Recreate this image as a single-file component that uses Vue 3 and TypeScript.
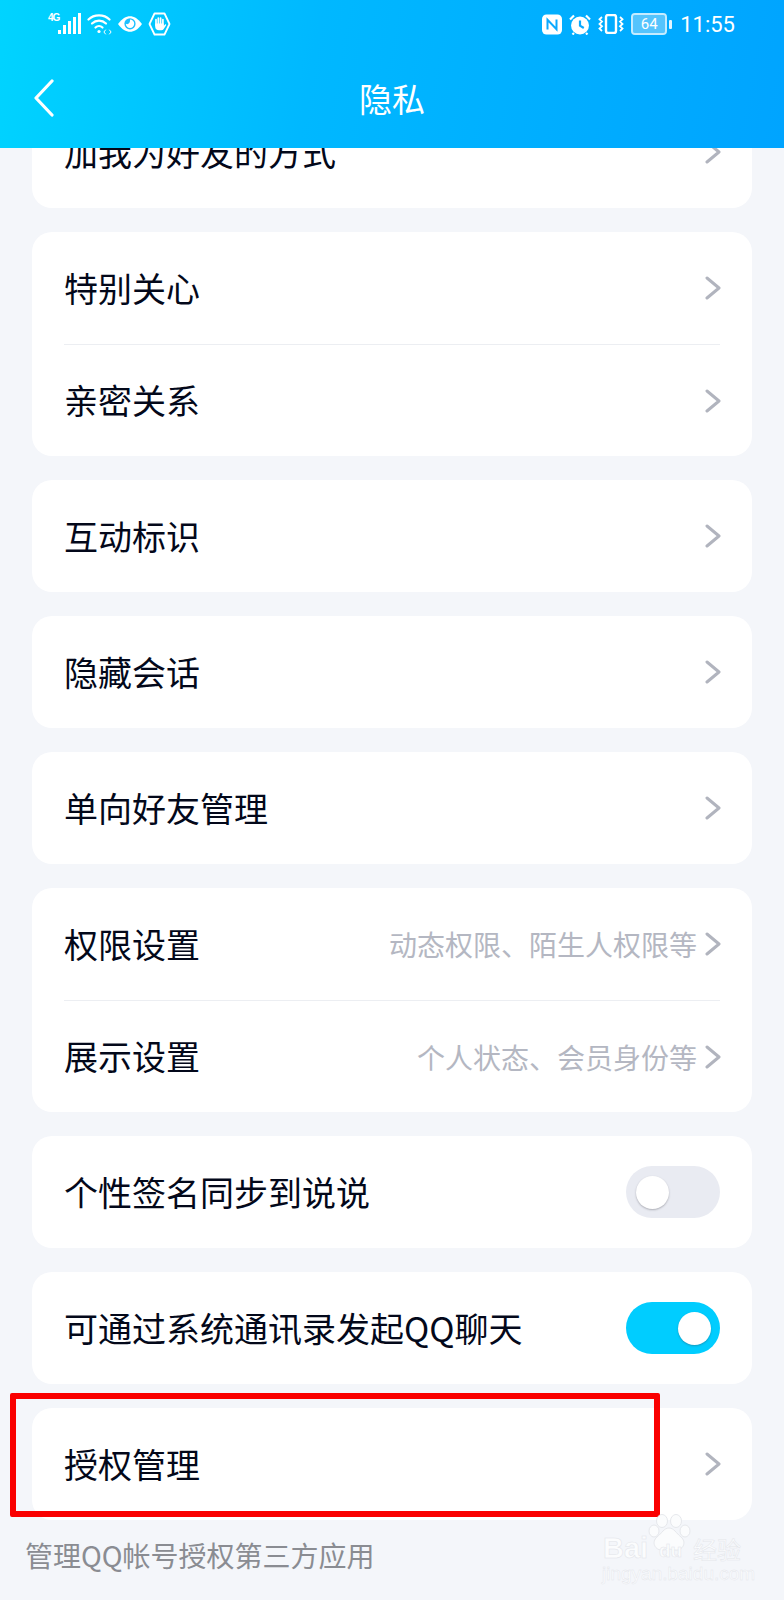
<template>
  <div class="page">
    <header class="top">
      <div class="status">
        <div class="status-left">
          <span class="net">4G</span>
          <svg class="signal" width="23" height="22" viewBox="0 0 23 22" fill="#fff">
            <rect x="0" y="17" width="3" height="4" />
            <rect x="5" y="12" width="3" height="9" />
            <rect x="10" y="8" width="3" height="13" />
            <rect x="15" y="4" width="3" height="17" />
            <rect x="20" y="0" width="3" height="21" />
          </svg>
          <svg width="25" height="22" viewBox="0 0 25 22" fill="none" stroke="#fff" stroke-width="2.2" stroke-linecap="round">
            <path d="M1.5 6.5C7 1 17 1 22.5 6.5" />
            <path d="M5 10.5c4-3.8 10-3.8 14 0" />
            <path d="M8.5 14.5c2-1.8 5-1.8 7 0" />
            <circle cx="12" cy="18.5" r="1.6" fill="#fff" stroke="none" />
            <path d="M18.5 17l-1.6 2 1.6 2M22.5 17l1.6 2-1.6 2" stroke-width="1" />
          </svg>
          <svg width="26" height="18" viewBox="0 0 26 18">
            <path d="M1 9C5 3.5 9 1.2 13 1.2S21 3.5 25 9c-4 5.5-8 7.8-12 7.8S5 14.5 1 9z" fill="#fff" />
            <circle cx="13" cy="8.8" r="5.6" fill="#1cc0ff" />
            <path d="M13 4.6a4.2 4.2 0 1 1-4.2 4.2c1.5 1 4.5.3 4.2-4.2z" fill="#fff" />
          </svg>
          <svg width="23" height="24" viewBox="0 0 23 24">
            <path d="M6.5 1.5h10l5 10.5-5 10.5h-10L1.500 12z" fill="none" stroke="#fff" stroke-width="1.8" stroke-linejoin="round" />
            <path d="M8 7.500v6M10.300 6v6M12.600 6v6M14.900 7.500v6" stroke="#fff" stroke-width="1.7" stroke-linecap="round" />
            <path d="M7.200 11.500h8.500V14l1.300-1.500c.8-.5 1.500.3 1 1l-2.300 3.500c-.6.800-1.200 1.200-2.200 1.200h-2.500c-2.300 0-3.800-1.500-3.800-3.500z" fill="#fff" />
          </svg>
        </div>
        <div class="status-right">
          <svg width="20" height="21" viewBox="0 0 20 21">
            <rect x="0" y="0.5" width="20" height="20" rx="4.5" fill="#fff" />
            <path d="M5.500 15.500V5.800l9 9.400V5.500" fill="none" stroke="#0aa9ff" stroke-width="2" />
          </svg>
          <svg width="22" height="21" viewBox="0 0 22 21">
            <circle cx="11" cy="11.5" r="9" fill="#fff" />
            <path d="M11 6.500v5.200l3.800 2.300" fill="none" stroke="#0aa9ff" stroke-width="2.2" />
            <path d="M1 5.500L5 1.500M21 5.500L17 1.500M5 19l-1.500 1.500M17 19l1.500 1.500" stroke="#fff" stroke-width="2.2" />
          </svg>
          <svg width="26" height="20" viewBox="0 0 26 20" fill="none" stroke="#fff">
            <rect x="8" y="1" width="10" height="18" rx="2" stroke-width="2.4" />
            <path d="M4 3l-2.500 2.300L4 7.600 1.500 10 4 12.300 1.500 14.600 4 17M22 3l2.500 2.300L22 7.600l2.500 2.400-2.500 2.300 2.500 2.300L22 17" stroke-width="1.8" />
          </svg>
          <div class="battery">
            <div class="battery-body"><span>64</span></div>
            <i class="battery-cap"></i>
          </div>
          <span class="time">11:55</span>
        </div>
      </div>
      <div class="nav">
        <svg class="back" width="20" height="38" viewBox="0 0 20 38" fill="none" stroke="#fff" stroke-width="3.2" stroke-linecap="round" stroke-linejoin="round">
          <path d="M18 2L2 19l16 17" />
        </svg>
        <span class="nav-title">隐私</span>
      </div>
    </header>

    <main class="list">
      <section v-for="(group, i) in groups" :key="i" class="card">
        <div v-for="row in group" :key="row.label" class="row">
          <span class="label">{{ row.label }}</span>
          <span v-if="row.hint" class="hint">{{ row.hint }}</span>
          <div v-if="row.toggle !== undefined" class="switch" :class="{ on: row.toggle }"><i></i></div>
          <svg v-else class="chev" width="16" height="24" viewBox="0 0 16 24" fill="none" stroke="#b1b4be" stroke-width="3" stroke-linecap="round" stroke-linejoin="round">
            <path d="M2 2l12 10L2 22" />
          </svg>
        </div>
      </section>
      <p class="foot">管理QQ帐号授权第三方应用</p>
    </main>

    <div class="mark"></div>

    <div class="wm">
      <svg class="paw" width="44" height="40" viewBox="0 0 44 40" fill="#fbfcfd" stroke="#e6e8ec">
        <ellipse cx="14" cy="7" rx="5.5" ry="6.5" />
        <ellipse cx="28" cy="7" rx="5.5" ry="6.5" />
        <ellipse cx="6" cy="17" rx="5" ry="6" />
        <ellipse cx="37" cy="17" rx="5" ry="6" />
        <path d="M21 14c5 0 7 5 12 9 6 5 2 14-6 13-3 0-4-1-6-1s-3 1-6 1C7 37 3 28 9 23c5-4 7-9 12-9z" />
      </svg>
      <div class="wm-line">
        <span class="wm-bai">Bai</span>
        <span class="wm-du">du</span>
        <span class="wm-cn">经验</span>
      </div>
      <div class="wm-url">jingyan.baidu.com</div>
    </div>
  </div>
</template>

<script setup lang="ts">
interface Row {
  label: string;
  hint?: string;
  toggle?: boolean;
}

const groups: Row[][] = [
  [{ label: "加我为好友的方式" }],
  [{ label: "特别关心" }, { label: "亲密关系" }],
  [{ label: "互动标识" }],
  [{ label: "隐藏会话" }],
  [{ label: "单向好友管理" }],
  [
    { label: "权限设置", hint: "动态权限、陌生人权限等" },
    { label: "展示设置", hint: "个人状态、会员身份等" },
  ],
  [{ label: "个性签名同步到说说", toggle: false }],
  [{ label: "可通过系统通讯录发起QQ聊天", toggle: true }],
  [{ label: "授权管理" }],
];
</script>

<style>
html,
body {
  margin: 0;
  background: #f4f6fa;
}
</style>

<style scoped>
.page {
  position: relative;
  width: 784px;
  height: 1600px;
  overflow: hidden;
  background: #f4f6fa;
  font-family: "Noto Sans CJK SC", "Noto Sans", sans-serif;
}
.top {
  position: relative;
  z-index: 1;
  height: 148px;
  background: linear-gradient(100deg, #00d4ff 0%, #00b8ff 40%, #00a4ff 100%);
  color: #fff;
}
.status {
  display: flex;
  justify-content: space-between;
  align-items: center;
  height: 48px;
  padding: 0 49px 0 48px;
}
.status-left,
.status-right {
  display: flex;
  align-items: center;
}
.status-left {
  gap: 5px;
}
.status-right {
  gap: 7px;
}
.net {
  align-self: flex-start;
  margin-right: -6px;
  font-family: "Liberation Sans", sans-serif;
  font-size: 10px;
  line-height: 12px;
  font-weight: 700;
  letter-spacing: -1px;
}
.signal {
  margin-right: 1px;
}
.battery {
  display: flex;
  align-items: center;
  gap: 2px;
}
.battery-body {
  display: flex;
  align-items: center;
  justify-content: center;
  box-sizing: border-box;
  width: 36px;
  height: 22px;
  border: 2px solid #c4ebff;
  border-radius: 4px;
  background: #55c4fd;
  background-clip: padding-box;
}
.battery-body span {
  font-family: "Roboto", sans-serif;
  font-size: 15px;
  line-height: 1;
}
.battery-cap {
  width: 3px;
  height: 9px;
  border-radius: 1px;
  background: #e2f5ff;
}
.time {
  margin-left: 1px;
  font-family: "Roboto", sans-serif;
  font-size: 22px;
}
.nav {
  position: relative;
  display: flex;
  justify-content: center;
  align-items: center;
  height: 100px;
}
.back {
  position: absolute;
  left: 34px;
  top: 31px;
}
.nav-title {
  font-size: 33px;
  line-height: 1;
}
.list {
  display: flex;
  flex-direction: column;
  gap: 24px;
  margin: -52px 32px 0;
}
.card {
  background: #fff;
  border-radius: 20px;
}
.row {
  display: flex;
  align-items: center;
  box-sizing: border-box;
  height: 112px;
  margin: 0 32px;
}
.row + .row {
  border-top: 1px solid #eceef2;
}
.label {
  flex: 1;
  margin-bottom: 2px;
  font-size: 34px;
  color: #03081a;
}
.hint {
  margin-right: 8px;
  font-size: 28px;
  color: #b4b7c2;
}
.chev {
  flex: none;
  margin-right: -1px;
}
.switch {
  position: relative;
  width: 94px;
  height: 52px;
  border-radius: 26px;
  background: #e9ebf2;
}
.switch i {
  position: absolute;
  top: 10px;
  left: 10px;
  width: 33px;
  height: 33px;
  border-radius: 50%;
  background: #fff;
  box-shadow: 0 1px 2px rgba(60, 60, 70, 0.35);
}
.switch.on {
  background: #00cdff;
}
.switch.on i {
  left: 52px;
}
.foot {
  margin: -9px 0 0 -7px;
  font-size: 28px;
  line-height: 40px;
  color: #8a8c92;
}
.mark {
  position: absolute;
  left: 10px;
  top: 1393px;
  width: 650px;
  height: 124px;
  box-sizing: border-box;
  border: 6px solid #fa0000;
  border-radius: 2px;
}
.wm {
  position: absolute;
  left: 602px;
  top: 1514px;
  width: 142px;
  height: 70px;
  color: #fbfcfd;
}
.paw {
  position: absolute;
  left: 46px;
  top: 0;
}
.wm-line {
  position: absolute;
  left: 0;
  top: 19px;
  width: 142px;
  height: 30px;
}
.wm-line span {
  position: absolute;
  -webkit-text-stroke: 0.5px #e3e5ea;
}
.wm-bai {
  left: 1px;
  top: 0;
  font-family: "Liberation Sans", sans-serif;
  font-size: 29px;
  line-height: 30px;
  font-weight: 700;
}
.wm-du {
  left: 57px;
  top: 7px;
  font-family: "Liberation Sans", sans-serif;
  font-size: 19px;
  line-height: 22px;
  font-weight: 700;
}
.wm-cn {
  left: 91px;
  top: 2px;
  font-size: 24px;
  line-height: 28px;
}
.wm-url {
  position: absolute;
  left: 0;
  top: 50px;
  font-family: "Liberation Sans", sans-serif;
  font-size: 19px;
  line-height: 20px;
  white-space: nowrap;
  -webkit-text-stroke: 0.4px #e3e5ea;
}
</style>
